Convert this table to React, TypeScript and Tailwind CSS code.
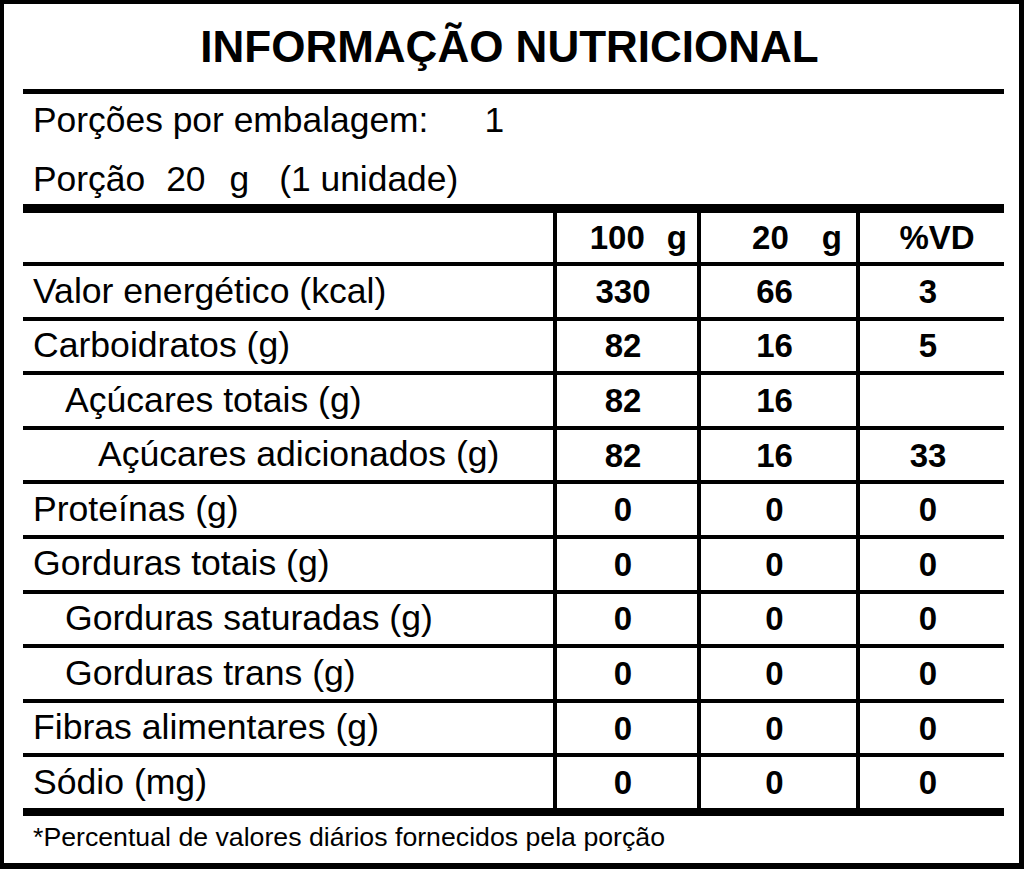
const rows: { label: string; indent: string; a: string; b: string; c: string }[] = [
  { label: 'Valor energético (kcal)', indent: 'pl-[10px]', a: '330', b: '66', c: '3' },
  { label: 'Carboidratos (g)', indent: 'pl-[10px]', a: '82', b: '16', c: '5' },
  { label: 'Açúcares totais (g)', indent: 'pl-[42px]', a: '82', b: '16', c: '' },
  { label: 'Açúcares adicionados (g)', indent: 'pl-[75px]', a: '82', b: '16', c: '33' },
  { label: 'Proteínas (g)', indent: 'pl-[10px]', a: '0', b: '0', c: '0' },
  { label: 'Gorduras totais (g)', indent: 'pl-[10px]', a: '0', b: '0', c: '0' },
  { label: 'Gorduras saturadas (g)', indent: 'pl-[42px]', a: '0', b: '0', c: '0' },
  { label: 'Gorduras trans (g)', indent: 'pl-[42px]', a: '0', b: '0', c: '0' },
  { label: 'Fibras alimentares (g)', indent: 'pl-[10px]', a: '0', b: '0', c: '0' },
  { label: 'Sódio (mg)', indent: 'pl-[10px]', a: '0', b: '0', c: '0' },
]

const grid = 'grid grid-cols-[530px_144px_159px_148px]'
const numCell = 'border-l-4 border-black flex items-center justify-center pr-[8px] font-bold text-[33px] leading-none'

export default function App() {
  return (
    <div
      className="w-[1024px] h-[869px] bg-white text-black box-border border-black border-t-4 border-l-4 border-r-[5px] border-b-[6px] pl-[19px] pr-[15px] flex flex-col"
      style={{ fontFamily: '"Liberation Sans", Arial, sans-serif' }}
    >
      {/* Title */}
      <div className="h-[85px] flex items-center justify-center pr-[8px]">
        <h1 className="text-[44px] font-bold leading-none">INFORMAÇÃO NUTRICIONAL</h1>
      </div>
      <div className="h-[5px] bg-black" />

      {/* Portions */}
      <div className="text-[35.4px]">
        <div className="h-[52px] leading-[52px] pl-[10px] whitespace-nowrap">
          Porções por embalagem:<span className="ml-[56px]">1</span>
        </div>
        <div className="h-[58px] pt-[8px] leading-[50px] pl-[10px] whitespace-nowrap">
          Porção<span className="ml-[21px]">20</span>
          <span className="ml-[24px]">g</span>
          <span className="ml-[30px]">(1 unidade)</span>
        </div>
      </div>
      <div className="h-[9px] bg-black" />

      {/* Header */}
      <div className={`${grid} h-[49px]`}>
        <div />
        <div className="border-l-4 border-black flex items-center justify-end pr-[10px] font-bold text-[33px] leading-none">
          <span>100</span>
          <span className="ml-[22px]">g</span>
        </div>
        <div className="border-l-4 border-black flex items-center justify-end pr-[14px] font-bold text-[33px] leading-none">
          <span>20</span>
          <span className="ml-[33px]">g</span>
        </div>
        <div className="border-l-4 border-black flex items-center justify-center pl-[10px] font-bold text-[33px] leading-none">
          %VD
        </div>
      </div>

      {/* Rows */}
      {rows.map((r) => (
        <div key={r.label} className={`${grid} h-[54.6px] border-t-4 border-black box-border`}>
          <div className={`flex items-center text-[35.6px] leading-none whitespace-nowrap ${r.indent}`}>{r.label}</div>
          <div className={numCell}>{r.a}</div>
          <div className={numCell}>{r.b}</div>
          <div className={numCell}>{r.c}</div>
        </div>
      ))}
      <div className="h-[8px] bg-black" />

      {/* Footnote */}
      <div className="flex-1 flex items-center pl-[10px] pb-[4px] text-[26.7px] leading-none whitespace-nowrap">
        *Percentual de valores diários fornecidos pela porção
      </div>
    </div>
  )
}
